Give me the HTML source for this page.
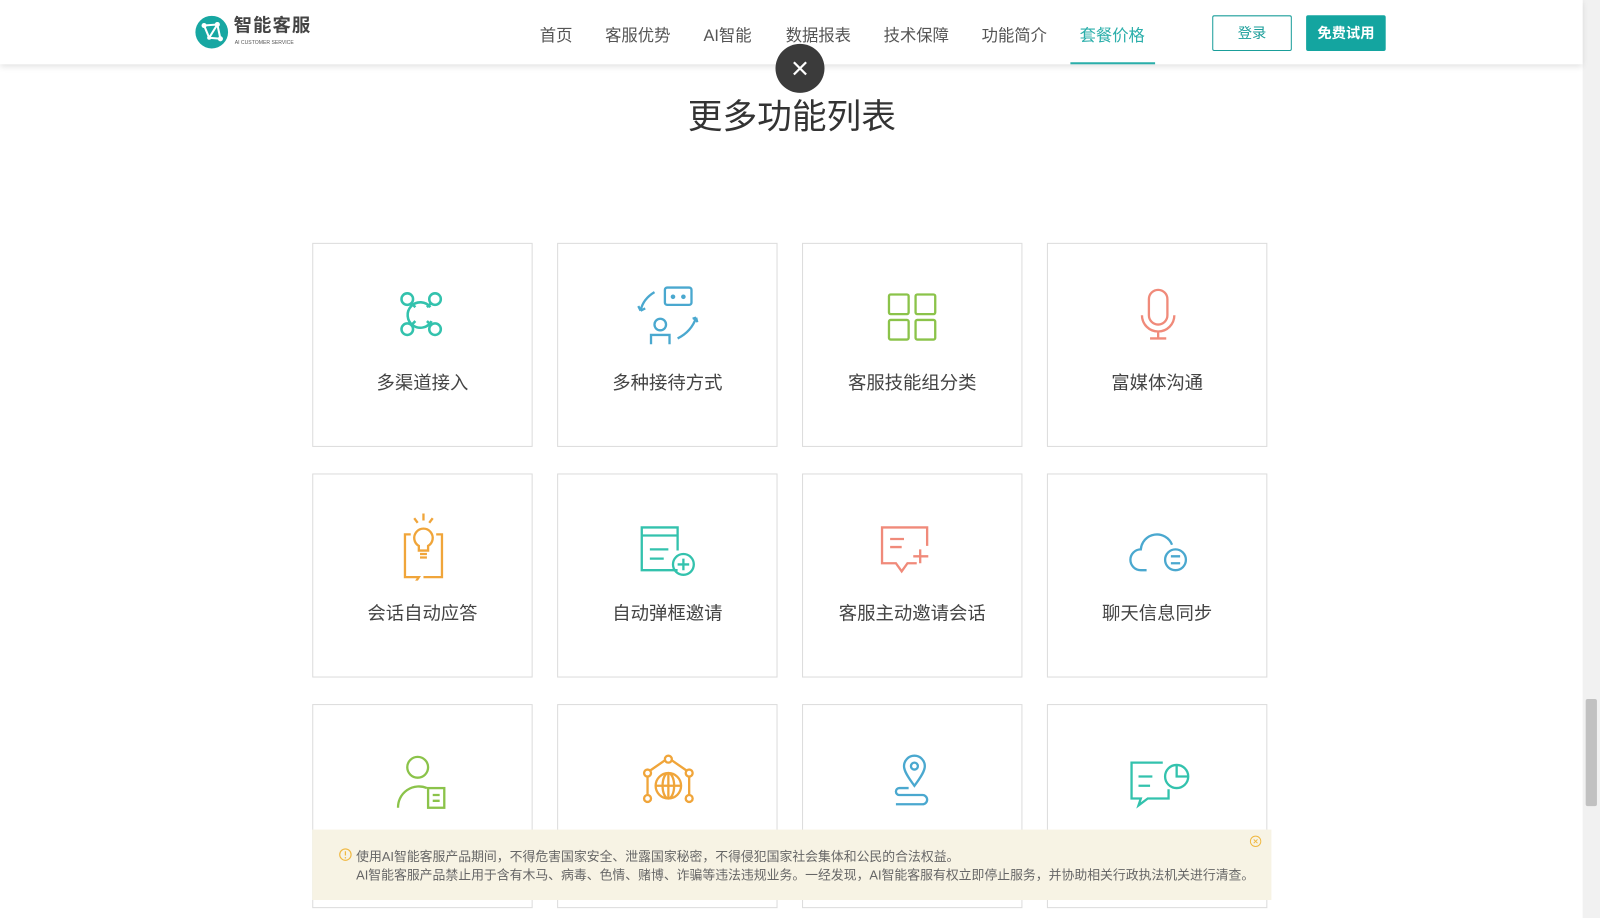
<!DOCTYPE html>
<html><head><meta charset="utf-8">
<style>
*{margin:0;padding:0;box-sizing:border-box}
html,body{width:1600px;height:900px;overflow:hidden;background:#fff}
body{font-family:"Liberation Sans","Noto Sans CJK SC",sans-serif}
#w{position:absolute;left:0;top:0;width:1568px;height:882px;transform:scale(1.0204);transform-origin:0 0}
.hdr{position:absolute;left:0;top:0;width:1551px;height:63px;background:#fff;box-shadow:0 2px 6px rgba(0,0,0,.12);z-index:5}
.nav{position:absolute;top:21px;font-size:16px;color:#555;transform:translateX(-50%);white-space:nowrap}
.btn{position:absolute;top:15px;height:35px;width:78px;border-radius:2px;font-size:14px;text-align:center;line-height:33px;font-weight:bold}
.card{position:absolute;width:216px;height:200px;border:1px solid #dcdcdc;background:#fff}
.card svg{position:absolute;left:74px;top:36px;width:68px;height:68px}
.card .t{position:absolute;top:122px;width:100%;text-align:center;font-size:18px;color:#444}
.close{position:absolute;left:760px;top:43px;width:48px;height:48px;border-radius:50%;background:#3b3b3b;z-index:6}
.notice{position:absolute;left:306px;top:813px;width:940px;height:69px;background:#f7f3e4;font-size:12.6px;color:#666;z-index:4;white-space:nowrap}
.sb{position:absolute;left:1551px;top:0;width:17px;height:900px;background:#f1f1f1}
</style></head><body><div id="w">
<div class="hdr">
  <svg style="position:absolute;left:191px;top:15px" width="33" height="33" viewBox="0 0 33 33">
    <circle cx="16.5" cy="16.5" r="16" fill="#17a7a2"/>
    <path d="M9 10 L22 9 L14 22 L25 23 M9 10 L14 22 M22 9 L25 23" stroke="#fff" stroke-width="2" fill="none"/>
    <circle cx="9" cy="10" r="2.5" fill="#fff"/><circle cx="22" cy="9" r="2.5" fill="#fff"/><circle cx="25" cy="23" r="2.5" fill="#fff"/><circle cx="14" cy="22" r="2" fill="#fff"/>
  </svg>
  <div style="position:absolute;left:229px;top:14px;font-size:18px;line-height:22px;font-weight:bold;color:#444;letter-spacing:1px">智能客服</div>
  <div style="position:absolute;left:230px;top:39px;font-size:5px;line-height:6px;color:#555">AI CUSTOMER SERVICE</div>
  <div class="nav" style="left:545px">首页</div>
  <div class="nav" style="left:625px">客服优势</div>
  <div class="nav" style="left:713px">AI智能</div>
  <div class="nav" style="left:802px">数据报表</div>
  <div class="nav" style="left:898px">技术保障</div>
  <div class="nav" style="left:994px">功能简介</div>
  <div class="nav" style="left:1090px;color:#2aaeaa">套餐价格</div>
  <div style="position:absolute;left:1049px;top:61px;width:83px;height:2px;background:#2aaeaa"></div>
  <div class="btn" style="left:1188px;border:1px solid #1a9e9a;color:#1a9e9a;font-weight:normal">登录</div>
  <div class="btn" style="left:1280px;background:#14a5a0;color:#fff;line-height:35px">免费试用</div>
</div>
<div class="close"><svg width="48" height="48"><path d="M18 18L30 30M30 18L18 30" stroke="#fff" stroke-width="2.2"/></svg></div>
<div style="position:absolute;left:0;width:1551px;top:87px;text-align:center;font-size:34px;color:#333;padding-left:1px">更多功能列表</div>

<div class="card" style="left:306px;top:238px"><svg viewBox="0 0 60 60" fill="none" stroke="#33c2ad" stroke-width="2.2"><circle cx="16" cy="16" r="5"/><circle cx="40" cy="16" r="5"/><circle cx="16" cy="42" r="5"/><circle cx="40" cy="42" r="5"/><path d="M36 23 A11 11 0 1 0 37 35"/><path d="M20 20l3 3M36 20l-3 3M20 38l3-3M36 38l-3-3"/></svg><div class="t">多渠道接入</div></div>
<div class="card" style="left:546px;top:238px"><svg viewBox="0 0 60 60" fill="none" stroke="#4aa8cf" stroke-width="2"><rect x="27" y="6" width="23" height="15" rx="2"/><circle cx="34" cy="14" r="1" fill="#4aa8cf"/><circle cx="43" cy="14" r="1" fill="#4aa8cf"/><path d="M18 10 Q8 16 6 26M6 26l-2-4M6 26l4-2"/><circle cx="23" cy="38" r="5"/><path d="M15 55v-8h16v8"/><path d="M38 50 Q50 44 54 32M54 32l-3 1M54 32l1 4"/></svg><div class="t">多种接待方式</div></div>
<div class="card" style="left:786px;top:238px"><svg viewBox="0 0 60 60" fill="none" stroke="#8bc34a" stroke-width="2"><rect x="9" y="12" width="17" height="17" rx="1.5"/><rect x="32" y="12" width="17" height="17" rx="1.5"/><rect x="9" y="34" width="17" height="17" rx="1.5"/><rect x="32" y="34" width="17" height="17" rx="1.5"/></svg><div class="t">客服技能组分类</div></div>
<div class="card" style="left:1026px;top:238px"><svg viewBox="0 0 60 60" fill="none" stroke="#f08a7a" stroke-width="2"><path d="M22 30V16a8 8 0 0 1 16 0v14a8 8 0 0 1-16 0"/><path d="M16 30a14 14 0 0 0 28 0M30 44v6M23 50h14"/></svg><div class="t">富媒体沟通</div></div>
<div class="card" style="left:306px;top:464px"><svg viewBox="0 0 60 60" fill="none" stroke="#f0a53a" stroke-width="2"><path d="M30 2v6M22 6l3 4M38 6l-3 4"/><path d="M26 30a8 8 0 1 1 8 0v4h-8z"/><path d="M27 37h6M27 40h6"/><path d="M19 20h-5v37h12l-4 6M41 20h5v37H30"/></svg><div class="t">会话自动应答</div></div>
<div class="card" style="left:546px;top:464px"><svg viewBox="0 0 60 60" fill="none" stroke="#33c2ad" stroke-width="2"><path d="M38 51H7V14h31v20M7 21h31"/><path d="M14 33h16M14 41h12"/><circle cx="43" cy="46" r="9"/><path d="M43 41v10M38 46h10"/></svg><div class="t">自动弹框邀请</div></div>
<div class="card" style="left:786px;top:464px"><svg viewBox="0 0 60 60" fill="none" stroke="#f08a7a" stroke-width="2"><path d="M42 30V14H3v31h12l5 7 5-7h8"/><path d="M10 24h12M10 31h10M36 33v12M30 39h13"/></svg><div class="t">客服主动邀请会话</div></div>
<div class="card" style="left:1026px;top:464px"><svg viewBox="0 0 60 60" fill="none" stroke="#4aa8cf" stroke-width="2"><path d="M20 51h-5a9 9 0 0 1 0-18 14 14 0 0 1 27-4"/><circle cx="45" cy="42" r="9"/><path d="M41 39h8M41 45h8"/></svg><div class="t">聊天信息同步</div></div>
<div class="card" style="left:306px;top:690px"><svg viewBox="0 0 60 60" fill="none" stroke="#8bc34a" stroke-width="2"><circle cx="25" cy="22" r="9"/><path d="M8 57a18 18 0 0 1 25-17"/><rect x="34" y="40" width="14" height="17"/><path d="M38 46h6M38 51h6"/></svg></div>
<div class="card" style="left:546px;top:690px"><svg viewBox="0 0 60 60" fill="none" stroke="#f0a53a" stroke-width="2"><circle cx="30" cy="38" r="11"/><ellipse cx="30" cy="38" rx="5" ry="11"/><path d="M19 38h22M30 27v22"/><circle cx="30" cy="15" r="3"/><circle cx="12" cy="27" r="3"/><circle cx="48" cy="27" r="3"/><circle cx="12" cy="49" r="3"/><circle cx="48" cy="49" r="3"/><path d="M14 25l13-9M46 25l-13-9M12 30v16M48 30v16"/></svg></div>
<div class="card" style="left:786px;top:690px"><svg viewBox="0 0 60 60" fill="none" stroke="#4aa8cf" stroke-width="2"><path d="M31 38c-6-8-9-13-9-17a9 9 0 0 1 18 0c0 4-3 9-9 17z"/><circle cx="31" cy="21" r="3"/><path d="M26 40h-8a3 3 0 0 0 0 6h20a4 4 0 0 1 0 8H15"/></svg></div>
<div class="card" style="left:1026px;top:690px"><svg viewBox="0 0 60 60" fill="none" stroke="#33c2ad" stroke-width="2"><path d="M34 18H7v31h8l-2 6 8-6h18v-8"/><path d="M13 30h12M13 38h10"/><circle cx="46" cy="30" r="10"/><path d="M46 20v10h10"/></svg></div>

<div class="notice">
  <svg style="position:absolute;left:26px;top:18px" width="13" height="13" viewBox="0 0 14 14"><circle cx="7" cy="7" r="6" fill="none" stroke="#f0b840" stroke-width="1.2"/><path d="M7 3.5v4.5" stroke="#f0b840" stroke-width="1.3"/><circle cx="7" cy="10.3" r=".8" fill="#f0b840"/></svg>
  <div style="position:absolute;left:43px;top:16px">使用AI智能客服产品期间，不得危害国家安全、泄露国家秘密，不得侵犯国家社会集体和公民的合法权益。</div>
  <div style="position:absolute;left:43px;top:34px">AI智能客服产品禁止用于含有木马、病毒、色情、赌博、诈骗等违法违规业务。一经发现，AI智能客服有权立即停止服务，并协助相关行政执法机关进行清查。</div>
  <svg style="position:absolute;left:918px;top:5px" width="13" height="13" viewBox="0 0 14 14"><circle cx="7" cy="7" r="5.5" fill="none" stroke="#f0b840"/><path d="M5 5l4 4M9 5l-4 4" stroke="#f0b840"/></svg>
</div>
<div class="sb"><div style="position:absolute;left:3px;top:685px;width:11px;height:105px;background:#c1c1c1;border-radius:2px"></div></div>
</div></body></html>
